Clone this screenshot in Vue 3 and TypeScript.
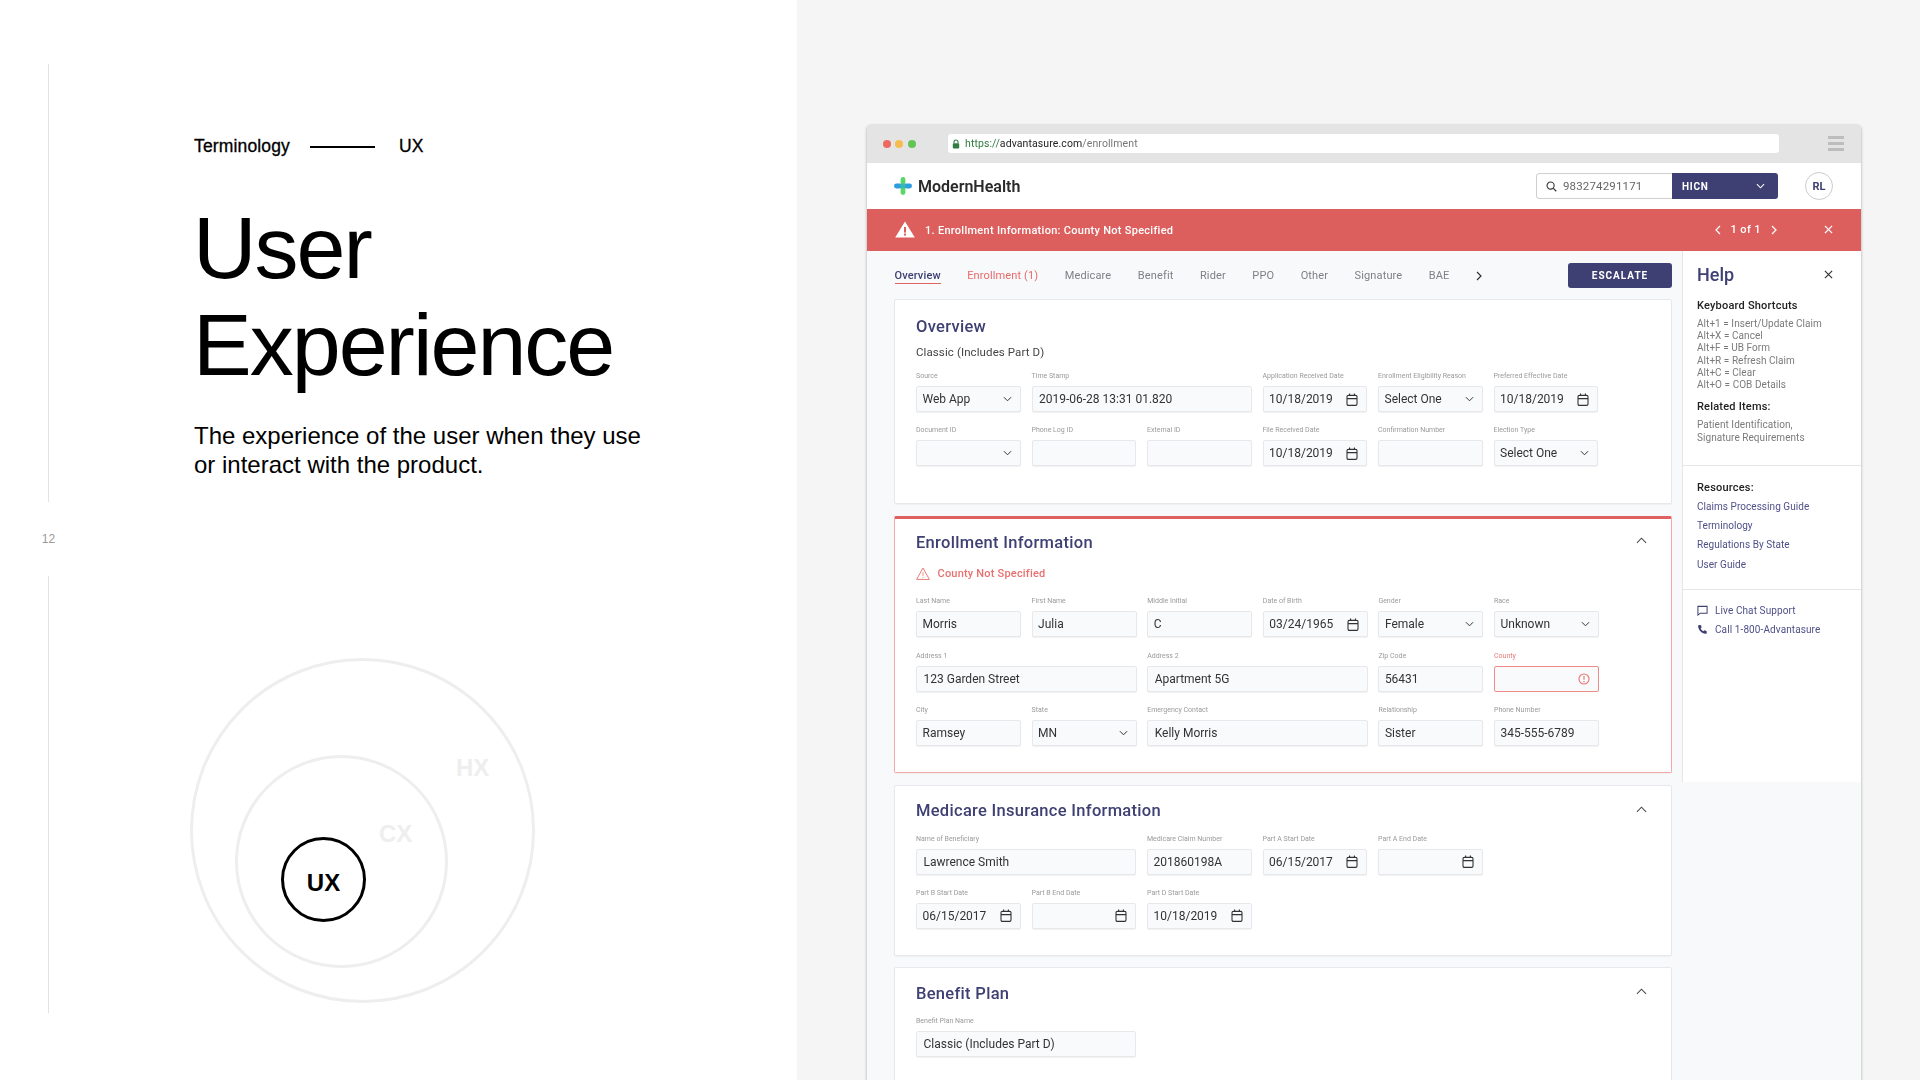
<template>
  <div class="slide">
    <!-- 左侧说明 -->
    <section class="intro">
      <div class="rail">
        <span class="rail-line"></span>
        <span class="page-no">12</span>
        <span class="rail-line rail-line-low"></span>
      </div>
      <div class="intro-body">
        <div class="crumb">
          <span>Terminology</span>
          <i class="crumb-dash"></i>
          <span>UX</span>
        </div>
        <h1 class="headline">User<br />Experience</h1>
        <p class="lede">The experience of the user when they use<br />or interact with the product.</p>
        <div class="diagram">
          <div class="ring ring-hx"></div>
          <div class="ring ring-cx"></div>
          <div class="ring ring-ux">UX</div>
          <span class="ring-label label-hx">HX</span>
          <span class="ring-label label-cx">CX</span>
        </div>
      </div>
    </section>

    <!-- 右侧浏览器截图 -->
    <section class="stage">
      <div class="browser">
        <div class="chrome">
          <div class="dots"><i class="d-red"></i><i class="d-yellow"></i><i class="d-green"></i></div>
          <div class="url">
            <svg class="lock" viewBox="0 0 10 12" width="8" height="10"><path d="M2.5 5V3.5a2.5 2.5 0 0 1 5 0V5" fill="none" stroke="#2f7d3f" stroke-width="1.3" /><rect x="1" y="5" width="8" height="6.5" rx="1" fill="#2f7d3f" /></svg>
            <span class="u-green">https://</span><span class="u-dark">advantasure.com</span><span class="u-gray">/enrollment</span>
          </div>
          <div class="burger"><i></i><i></i><i></i></div>
        </div>

        <header class="topbar">
          <div class="brand">
            <svg viewBox="0 0 18 18" width="18" height="18">
              <rect x="0" y="6.6" width="8" height="4.8" rx="2.4" fill="#2d9fe0" />
              <rect x="10" y="6.6" width="8" height="4.8" rx="2.4" fill="#2d9fe0" />
              <rect x="6.6" y="0" width="4.8" height="8" rx="2.4" fill="#5ad66a" />
              <rect x="6.6" y="10" width="4.8" height="8" rx="2.4" fill="#5ad66a" />
              <rect x="6.6" y="6.6" width="4.8" height="4.8" fill="#3cb8a8" />
            </svg>
            <span>ModernHealth</span>
          </div>
          <div class="search">
            <div class="search-box">
              <svg viewBox="0 0 12 12" width="11" height="11"><circle cx="5" cy="5" r="3.9" fill="none" stroke="#333" stroke-width="1.2" /><path d="M8 8l3.2 3.2" stroke="#333" stroke-width="1.3" /></svg>
              <span>983274291171</span>
            </div>
            <div class="search-type">
              <span>HICN</span>
              <svg viewBox="0 0 10 6" width="9" height="6"><path d="M1 1l4 4 4-4" fill="none" stroke="#fff" stroke-width="1.2" /></svg>
            </div>
          </div>
          <div class="avatar">RL</div>
        </header>

        <div class="alert">
          <svg viewBox="0 0 20 17" width="20" height="17"><path d="M10 0.6L19.8 16.6H0.2Z" fill="#fff" /><rect x="9" y="6" width="2" height="5.6" fill="#dc5f5e" /><rect x="9" y="12.6" width="2" height="2" fill="#dc5f5e" /></svg>
          <span class="alert-text">1. Enrollment Information: County Not Specified</span>
          <div class="pager">
            <svg viewBox="0 0 6 10" width="6" height="10"><path d="M5 1L1 5l4 4" fill="none" stroke="#fff" stroke-width="1.2" /></svg>
            <span>1 of 1</span>
            <svg viewBox="0 0 6 10" width="6" height="10"><path d="M1 1l4 4-4 4" fill="none" stroke="#fff" stroke-width="1.2" /></svg>
          </div>
          <svg class="alert-close" viewBox="0 0 10 10" width="9" height="9"><path d="M1 1l8 8M9 1l-8 8" stroke="#fff" stroke-width="1.4" /></svg>
        </div>

        <div class="workspace">
          <main class="content">
            <div class="tabs-row">
              <nav class="tabs">
                <span
                  v-for="tab in tabs"
                  :key="tab.name"
                  class="tab"
                  :class="tab.state"
                >{{ tab.name }}</span>
                <svg viewBox="0 0 6 10" width="6" height="10"><path d="M1 1l4 4-4 4" fill="none" stroke="#333" stroke-width="1.2" /></svg>
              </nav>
              <button class="escalate">ESCALATE</button>
            </div>

            <div class="cards">
              <article
                v-for="card in cards"
                :key="card.title"
                class="card"
                :class="card.cls"
              >
                <div class="card-head">
                  <h2>{{ card.title }}</h2>
                  <svg v-if="card.collapsible" viewBox="0 0 12 7" width="11" height="7"><path d="M1 6l5-5 5 5" fill="none" stroke="#444" stroke-width="1.1" /></svg>
                </div>
                <div v-if="card.subtitle" class="card-sub">{{ card.subtitle }}</div>
                <div v-if="card.warning" class="card-warn">
                  <svg viewBox="0 0 14 13" width="14" height="13"><path d="M7 1L13.4 12.4H.6Z" fill="none" stroke="#ea7a7a" stroke-width="1" /><path d="M7 5v4M7 10v1" stroke="#ea7a7a" stroke-width=".8" /></svg>
                  <span>{{ card.warning }}</span>
                </div>
                <div class="grid">
                  <div
                    v-for="(field, i) in card.fields"
                    :key="i"
                    class="field"
                    :class="{ span2: field.span === 2, 'has-error': field.kind === 'error', 'new-row': field.newRow }"
                  >
                    <label>{{ field.label }}</label>
                    <div class="input" :class="{ pad: field.span === 2 }">
                      <span>{{ field.value }}</span>
                      <svg v-if="field.kind === 'select'" viewBox="0 0 10 6" width="9" height="6"><path d="M1 1l4 4 4-4" fill="none" stroke="#333" stroke-width="1.1" /></svg>
                      <svg v-else-if="field.kind === 'date'" viewBox="0 0 12 13" width="12" height="13"><rect x="1" y="2.400" width="10" height="10" rx="1.300" fill="none" stroke="#333" stroke-width="1.1" /><path d="M1 5.600h10M3.600 .4v2.600M8.400 .4v2.600" stroke="#333" stroke-width="1.1" /></svg>
                      <svg v-else-if="field.kind === 'error'" viewBox="0 0 12 12" width="12" height="12"><circle cx="6" cy="6" r="5" fill="none" stroke="#e67070" stroke-width="1.1" /><path d="M6 3v3.800M6 8v1.200" stroke="#e67070" stroke-width="1.1" /></svg>
                    </div>
                  </div>
                </div>
              </article>
            </div>
          </main>

          <aside class="help">
            <div class="help-block">
              <div class="help-title">
                <h3>Help</h3>
                <svg viewBox="0 0 10 10" width="9" height="9"><path d="M1 1l8 8M9 1l-8 8" stroke="#333" stroke-width="1.3" /></svg>
              </div>
              <h4>Keyboard Shortcuts</h4>
              <div v-for="line in shortcuts" :key="line" class="help-line">{{ line }}</div>
              <h4 class="related">Related Items:</h4>
              <div class="help-line">Patient Identification,</div>
              <div class="help-line">Signature Requirements</div>
            </div>
            <div class="help-block resources">
              <h4>Resources:</h4>
              <a v-for="link in resources" :key="link">{{ link }}</a>
            </div>
            <div class="help-block contact">
              <a>
                <svg viewBox="0 0 12 12" width="11" height="11"><path d="M1 1.500h10v7.400H3.600L1 11Z" fill="none" stroke="#3e4073" stroke-width="1.1" /></svg>
                Live Chat Support
              </a>
              <a>
                <svg viewBox="0 0 12 12" width="11" height="11"><path d="M2.400 1l2 .4.7 2.400-1.200 1.100c.6 1.300 1.600 2.300 3 3l1.200-1.200 2.300.8.3 2c0 .8-.7 1.200-1.400 1.100C4.800 10.200 1.700 7 1.200 2.500 1.100 1.700 1.700 1 2.400 1Z" fill="#3e4073" /></svg>
                Call 1-800-Advantasure
              </a>
            </div>
          </aside>
        </div>
      </div>
    </section>
  </div>
</template>

<script setup lang="ts">
type FieldKind = 'text' | 'select' | 'date' | 'error';

interface Field {
  kind: FieldKind;
  label: string;
  value: string;
  span?: number;
  newRow?: boolean;
}

interface Card {
  title: string;
  cls: string;
  collapsible: boolean;
  subtitle?: string;
  warning?: string;
  fields: Field[];
}

const tabs = [
  { name: 'Overview', state: 'active' },
  { name: 'Enrollment (1)', state: 'danger' },
  { name: 'Medicare', state: '' },
  { name: 'Benefit', state: '' },
  { name: 'Rider', state: '' },
  { name: 'PPO', state: '' },
  { name: 'Other', state: '' },
  { name: 'Signature', state: '' },
  { name: 'BAE', state: '' },
];

const cards: Card[] = [
  {
    title: 'Overview',
    cls: 'card-overview',
    collapsible: false,
    subtitle: 'Classic (Includes Part D)',
    fields: [
      { kind: 'select', label: 'Source', value: 'Web App' },
      { kind: 'text', label: 'Time Stamp', value: '2019-06-28 13:31 01.820', span: 2 },
      { kind: 'date', label: 'Application Received Date', value: '10/18/2019' },
      { kind: 'select', label: 'Enrollment Eligibility Reason', value: 'Select One' },
      { kind: 'date', label: 'Preferred Effective Date', value: '10/18/2019' },
      { kind: 'select', label: 'Document ID', value: '' },
      { kind: 'text', label: 'Phone Log ID', value: '' },
      { kind: 'text', label: 'External ID', value: '' },
      { kind: 'date', label: 'File Received Date', value: '10/18/2019' },
      { kind: 'text', label: 'Confirmation Number', value: '' },
      { kind: 'select', label: 'Election Type', value: 'Select One' },
    ],
  },
  {
    title: 'Enrollment Information',
    cls: 'card-enroll',
    collapsible: true,
    warning: 'County Not Specified',
    fields: [
      { kind: 'text', label: 'Last Name', value: 'Morris' },
      { kind: 'text', label: 'First Name', value: 'Julia' },
      { kind: 'text', label: 'Middle Initial', value: 'C' },
      { kind: 'date', label: 'Date of Birth', value: '03/24/1965' },
      { kind: 'select', label: 'Gender', value: 'Female' },
      { kind: 'select', label: 'Race', value: 'Unknown' },
      { kind: 'text', label: 'Address 1', value: '123 Garden Street', span: 2 },
      { kind: 'text', label: 'Address 2', value: 'Apartment 5G', span: 2 },
      { kind: 'text', label: 'Zip Code', value: '56431' },
      { kind: 'error', label: 'County', value: '' },
      { kind: 'text', label: 'City', value: 'Ramsey' },
      { kind: 'select', label: 'State', value: 'MN' },
      { kind: 'text', label: 'Emergency Contact', value: 'Kelly Morris', span: 2 },
      { kind: 'text', label: 'Relationship', value: 'Sister' },
      { kind: 'text', label: 'Phone Number', value: '345-555-6789' },
    ],
  },
  {
    title: 'Medicare Insurance Information',
    cls: 'card-medicare',
    collapsible: true,
    fields: [
      { kind: 'text', label: 'Name of Beneficiary', value: 'Lawrence Smith', span: 2 },
      { kind: 'text', label: 'Medicare Claim Number', value: '201860198A' },
      { kind: 'date', label: 'Part A Start Date', value: '06/15/2017' },
      { kind: 'date', label: 'Part A End Date', value: '' },
      { kind: 'date', label: 'Part B Start Date', value: '06/15/2017', newRow: true },
      { kind: 'date', label: 'Part B End Date', value: '' },
      { kind: 'date', label: 'Part D Start Date', value: '10/18/2019' },
    ],
  },
  {
    title: 'Benefit Plan',
    cls: 'card-benefit',
    collapsible: true,
    fields: [{ kind: 'text', label: 'Benefit Plan Name', value: 'Classic (Includes Part D)', span: 2 }],
  },
];

const shortcuts = [
  'Alt+1 = Insert/Update Claim',
  'Alt+X = Cancel',
  'Alt+F = UB Form',
  'Alt+R = Refresh Claim',
  'Alt+C = Clear',
  'Alt+O = COB Details',
];

const resources = ['Claims Processing Guide', 'Terminology', 'Regulations By State', 'User Guide'];
</script>

<style>
html,
body {
  margin: 0;
  background: #f5f5f5;
}
</style>

<style scoped>
.slide {
  display: flex;
  width: 1920px;
  height: 1080px;
  overflow: hidden;
  background: #f5f5f5;
  font-family: Roboto, "Liberation Sans", sans-serif;
}

/* 左侧 */
.intro {
  display: flex;
  flex: none;
  width: 797px;
  height: 1080px;
  background: #fff;
  font-family: "Liberation Sans", Arial, sans-serif;
  color: #000;
}

.rail {
  display: flex;
  flex: none;
  flex-direction: column;
  align-items: center;
  width: 24px;
  margin-left: 36px;
  padding-top: 64px;
  box-sizing: border-box;
}

.rail-line {
  flex: none;
  width: 1px;
  height: 438px;
  background: #e2e2e2;
}

.rail-line-low {
  height: 437px;
}

.page-no {
  flex: none;
  height: 74px;
  line-height: 74px;
  font-size: 12px;
  color: #999;
  padding-left: 1px;
}

.intro-body {
  margin-left: 134px;
  padding-top: 134px;
}

.crumb {
  display: flex;
  align-items: center;
  height: 24px;
  font-size: 17.500px;
  letter-spacing: 0.15px;
  font-weight: 400;
  -webkit-text-stroke: 0.3px #000;
}

.crumb-dash {
  width: 65px;
  height: 2px;
  margin: 1px 24px 0 20px;
  background: #000;
}

.headline {
  margin: 41px 0 0 -1px;
  font-size: 88px;
  line-height: 97px;
  font-weight: 400;
  letter-spacing: -2px;
}

.lede {
  margin: 28px 0 0;
  font-size: 24px;
  line-height: 29px;
}

.diagram {
  position: relative;
  width: 500px;
  height: 400px;
  margin-top: 1px;
}

.ring {
  position: absolute;
  box-sizing: border-box;
  border-radius: 50%;
  border: 3px solid #eee;
}

.ring-hx {
  left: -4px;
  top: 178px;
  width: 345px;
  height: 345px;
}

.ring-cx {
  left: 41px;
  top: 275px;
  width: 213px;
  height: 213px;
}

.ring-ux {
  left: 87px;
  top: 357px;
  display: flex;
  align-items: center;
  justify-content: center;
  width: 85px;
  height: 85px;
  border-color: #000;
  font-size: 24px;
  font-weight: 700;
  padding-top: 6px;
}

.ring-label {
  position: absolute;
  font-size: 24px;
  line-height: 28px;
  font-weight: 700;
  color: #eee;
}

.label-hx {
  left: 262px;
  top: 274px;
}

.label-cx {
  left: 185px;
  top: 340px;
}

/* 浏览器 */
.stage {
  flex: 1;
  padding: 124px 0 0 70px;
  box-sizing: border-box;
}

.browser {
  width: 994px;
  height: 956px;
  overflow: hidden;
  border-radius: 4px 4px 0 0;
  background: #f8f9fb;
  box-shadow: 0 2px 3px rgba(0, 0, 0, 0.35);
  filter: blur(0.4px);
}

.chrome {
  display: flex;
  align-items: center;
  height: 39px;
  background: #e4e4e4;
}

.dots {
  display: flex;
  gap: 4.500px;
  width: 81px;
  padding-left: 15.500px;
  box-sizing: border-box;
}

.dots i {
  width: 8px;
  height: 8px;
  border-radius: 50%;
}

.d-red { background: #ee6a5e; }
.d-yellow { background: #f5bd4f; }
.d-green { background: #61c554; }

.url {
  display: flex;
  align-items: center;
  width: 831px;
  height: 19px;
  border-radius: 3px;
  background: #fff;
  font-size: 10.500px;
  letter-spacing: 0.1px;
}

.lock {
  margin: 0 5px 0 4px;
}

.u-green { color: #2f7d3f; }
.u-dark { color: #222; }
.u-gray { color: #777; }

.burger {
  display: flex;
  flex-direction: column;
  gap: 3px;
  width: 16px;
  margin-left: 49px;
}

.burger i {
  height: 3px;
  background: #bdbdbd;
}

.topbar {
  display: flex;
  align-items: center;
  height: 46px;
  padding-left: 27px;
  background: #fff;
}

.brand {
  display: flex;
  align-items: center;
  gap: 6px;
  font-size: 16px;
  font-weight: 600;
  color: #2a2a2a;
}

.search {
  display: flex;
  height: 26px;
  margin-left: auto;
  border-radius: 3px;
  overflow: hidden;
}

.search-box {
  display: flex;
  align-items: center;
  gap: 6px;
  width: 136px;
  padding-left: 9px;
  box-sizing: border-box;
  border: 1px solid #cfcfcf;
  border-right: 0;
  border-radius: 3px 0 0 3px;
  font-size: 11.500px;
  letter-spacing: 0.15px;
  color: #666;
}

.search-type {
  display: flex;
  align-items: center;
  justify-content: space-between;
  width: 106px;
  padding: 0 13px 0 10px;
  box-sizing: border-box;
  background: #3e4073;
  color: #fff;
  font-size: 10px;
  font-weight: 700;
  letter-spacing: 0.7px;
}

.avatar {
  display: flex;
  align-items: center;
  justify-content: center;
  width: 28px;
  height: 28px;
  margin: 0 28px 0 27px;
  box-sizing: border-box;
  border: 1px solid #ccc;
  border-radius: 50%;
  font-size: 11px;
  font-weight: 700;
  color: #3e4073;
}

.alert {
  display: flex;
  align-items: center;
  height: 41.500px;
  padding-left: 28px;
  background: #dc5f5e;
  color: #fff;
  font-size: 11px;
  font-weight: 500;
}

.alert-text {
  margin-left: 10px;
  letter-spacing: 0.28px;
  padding-top: 1px;
}

.pager {
  display: flex;
  align-items: center;
  gap: 10px;
  margin-left: auto;
  letter-spacing: 0.4px;
}

.alert-close {
  margin: 0 28px 0 47px;
}

.workspace {
  display: flex;
  align-items: flex-start;
}

.content {
  width: 815px;
  flex: none;
}

.tabs-row {
  display: flex;
  align-items: center;
  height: 48.500px;
  padding: 2px 10px 0 27.500px;
  box-sizing: border-box;
}

.tabs {
  display: flex;
  align-items: center;
  gap: 26.500px;
  font-size: 11px;
  letter-spacing: 0.13px;
  color: #7f8085;
}

.tab {
  position: relative;
}

.tab.active {
  color: #3e4073;
  font-weight: 500;
}

/* 选中标签的下划线 */
.tab.active::after {
  content: "";
  position: absolute;
  left: 0;
  right: 0;
  bottom: -2px;
  height: 1.500px;
  background: #e06464;
}

.tab.danger {
  color: #e86a6a;
}

.escalate {
  width: 104px;
  height: 25px;
  margin-left: auto;
  margin-top: -1px;
  border: 0;
  border-radius: 3px;
  background: #3e4073;
  color: #fff;
  font-family: inherit;
  font-size: 10px;
  font-weight: 700;
  letter-spacing: 1px;
}

.cards {
  display: flex;
  flex-direction: column;
  gap: 11.500px;
  margin-left: 27px;
  width: 778px;
}

.card {
  box-sizing: border-box;
  padding: 15px 21px 25px;
  border: 1px solid #e6e8ec;
  border-radius: 2px;
  background: #fff;
  box-shadow: 0 1px 1px rgba(0, 0, 0, 0.04);
}

.card-overview {
  padding-top: 16px;
  padding-bottom: 37px;
}

.card-enroll {
  padding-top: 13.500px;
  padding-bottom: 26px;
  border-color: #f3a8a8;
  border-top: 3px solid #e0605f;
}

.card-medicare {
  padding-bottom: 26px;
}

.card-benefit {
  padding-bottom: 60px;
}

.card-head {
  display: flex;
  align-items: center;
  justify-content: space-between;
  height: 20px;
  padding-right: 3px;
}

.card-head h2 {
  margin: 0;
  font-size: 16.500px;
  font-weight: 500;
  letter-spacing: 0.3px;
  color: #3e4073;
}

.card-head svg {
  margin-top: -3px;
}

.card-sub {
  margin-top: 8px;
  height: 16px;
  line-height: 16px;
  font-size: 11.500px;
  color: #444;
  letter-spacing: 0.1px;
}

.card-warn {
  display: flex;
  align-items: center;
  gap: 7.500px;
  height: 16px;
  margin-top: 13px;
  font-size: 11px;
  font-weight: 500;
  color: #ea7070;
  letter-spacing: 0.2px;
}

.grid {
  display: grid;
  grid-template-columns: repeat(6, 104.500px);
  column-gap: 11px;
  row-gap: 13px;
  margin-top: 13px;
}

.card-overview .grid {
  margin-top: 11px;
}

.card-enroll .grid {
  grid-template-columns: repeat(6, 105px);
  column-gap: 10.600px;
  row-gap: 13.500px;
  margin-top: 15px;
}

.field {
  min-width: 0;
}

.span2 {
  grid-column: span 2;
}

.new-row {
  grid-column-start: 1;
}

.field label {
  display: block;
  height: 10px;
  line-height: 10px;
  margin-bottom: 5px;
  font-size: 7px;
  color: #9a9a9a;
  white-space: nowrap;
}

.input {
  display: flex;
  align-items: center;
  justify-content: space-between;
  height: 26px;
  padding: 0 8px 0 5.500px;
  box-sizing: border-box;
  border: 1px solid #e6e8eb;
  border-radius: 2px;
  background: #f9fafc;
  box-shadow: 0 1px 1px rgba(0, 0, 0, 0.06);
  font-size: 12px;
  color: #333;
}

.input.pad {
  padding-left: 6.500px;
}

.has-error label {
  color: #ea7a7a;
}

.has-error .input {
  border-color: #ee8a8a;
  box-shadow: none;
}

/* 帮助面板 */
.help {
  flex: 1;
  height: 531.500px;
  box-sizing: border-box;
  border-left: 1px solid #e6e6e6;
  background: #fff;
}

.help-block {
  padding: 0 14px;
  border-bottom: 1px solid #e6e6e6;
}

.help-block:first-child {
  height: 215px;
  box-sizing: border-box;
}

.help-title {
  display: flex;
  align-items: center;
  justify-content: space-between;
  height: 48px;
  padding-right: 14px;
}

.help-title h3 {
  margin: 0;
  font-size: 18px;
  font-weight: 500;
  color: #3e4073;
}

.help h4 {
  margin: 0 0 5px;
  height: 14px;
  line-height: 14px;
  font-size: 11px;
  font-weight: 500;
  letter-spacing: 0.2px;
  color: #222;
}

.help h4.related {
  margin-top: 8.500px;
}

.help-line {
  height: 12.400px;
  line-height: 12.400px;
  font-size: 10px;
  letter-spacing: 0.05px;
  color: #7b7b7b;
}

.resources {
  height: 124px;
  padding-top: 15px;
  box-sizing: border-box;
}

.help .resources h4 {
  margin-bottom: 2px;
}

.resources a {
  display: block;
  height: 19.400px;
  line-height: 19.400px;
  font-size: 10px;
  letter-spacing: 0.05px;
  color: #4e5088;
}

.contact {
  border-bottom: 0;
  padding-top: 11px;
}

.contact a {
  display: flex;
  align-items: center;
  gap: 7px;
  height: 19.400px;
  font-size: 10px;
  letter-spacing: 0.1px;
  color: #4e5088;
}
</style>
